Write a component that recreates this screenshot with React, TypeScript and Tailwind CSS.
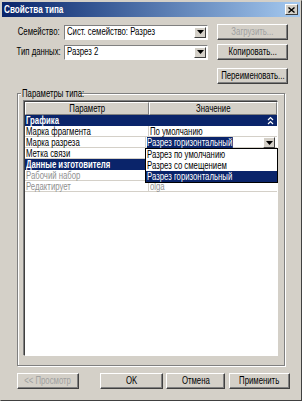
import React from "react";

const font = { fontFamily: '"Liberation Sans", Arial, sans-serif' };

// the screenshot is squeezed horizontally, so text is drawn narrower
function T({ children, o = "left", className = "" }: { children: React.ReactNode; o?: "left" | "right" | "center"; className?: string }) {
  const origin = o === "left" ? "origin-left" : o === "right" ? "origin-right" : "origin-center";
  return <span className={`inline-block whitespace-nowrap scale-x-[0.74] ${origin} ${className}`}>{children}</span>;
}

function Btn({ children, disabled, className = "" }: { children: React.ReactNode; disabled?: boolean; className?: string }) {
  return (
    <div
      className={`flex items-center justify-center whitespace-nowrap h-[16px] text-[10.5px] border border-t-white border-l-white border-r-[#404040] border-b-[#404040] shadow-[inset_-1px_-1px_0_#808080] ${
        disabled ? "text-[#a0a0a0]" : "text-black"
      } ${className}`}
    >
      <T o="center">{children}</T>
    </div>
  );
}

function Arrow() {
  return (
    <div className="w-[12px] h-[11px] bg-[#d4d0c8] border border-t-white border-l-white border-r-[#404040] border-b-[#404040] flex items-center justify-center">
      <svg width="7" height="4" viewBox="0 0 7 4">
        <path d="M0 0h7L3.5 4z" fill="#000" />
      </svg>
    </div>
  );
}

function Combo({ value }: { value: string }) {
  return (
    <div className="w-[144px] h-[15px] bg-white border border-t-[#808080] border-l-[#808080] border-r-white border-b-white flex items-center justify-between pl-[2px] pr-[1px] text-[10.5px]">
      <T>{value}</T>
      <Arrow />
    </div>
  );
}

function Row({ name, value, muted, children }: { name: string; value?: string; muted?: boolean; children?: React.ReactNode }) {
  return (
    <div className={`flex h-[11px] text-[10.5px] leading-[11px] border-b border-[#d4d0c8] ${muted ? "text-[#909090]" : "text-black"}`}>
      <div className="w-[124px] pl-[1px] border-r border-[#d4d0c8]">
        <T>{name}</T>
      </div>
      <div className="flex-1 pl-[1px] relative">{children ?? <T>{value}</T>}</div>
    </div>
  );
}

function Section({ name, chevron }: { name: string; chevron?: boolean }) {
  return (
    <div className="flex h-[11px] bg-[#0a246a] text-white font-bold text-[10.5px] leading-[11px] pl-[1px] pr-[3px] justify-between">
      <T>{name}</T>
      {chevron && (
        <svg width="7" height="9" viewBox="0 0 7 9" className="mt-[1px]">
          <path d="M1 4l2.5-2.5L6 4M1 8l2.5-2.5L6 8" stroke="#fff" strokeWidth="1.2" fill="none" />
        </svg>
      )}
    </div>
  );
}

export default function App() {
  return (
    <div
      style={font}
      className="w-[302px] h-[401px] bg-[#d4d0c8] border border-t-[#d4d0c8] border-l-[#d4d0c8] border-r-[#404040] border-b-[#404040] flex flex-col"
    >
      <div className="h-[15px] mx-[1px] mt-[1px] bg-gradient-to-r from-[#0a246a] to-[#a6caf0] flex items-center justify-between pl-[2px] pr-[2px]">
        <T className="text-white font-bold text-[11px]">Свойства типа</T>
        <div className="w-[13px] h-[11px] bg-[#d4d0c8] border border-t-white border-l-white border-r-[#404040] border-b-[#404040] flex items-center justify-center">
          <svg width="7" height="6" viewBox="0 0 7 6">
            <path d="M0.5 0.5l6 5M6.5 0.5l-6 5" stroke="#000" strokeWidth="1.4" />
          </svg>
        </div>
      </div>

      <div className="flex flex-col pt-[7px]">
        <div className="flex items-center h-[16px]">
          <div className="w-[61px] text-right text-[10.5px] pr-[2px]">
            <T o="right">Семейство:</T>
          </div>
          <div className="ml-[2px]">
            <Combo value="Сист. семейство: Разрез" />
          </div>
          <Btn disabled className="ml-[9px] w-[71px]">Загрузить...</Btn>
        </div>
        <div className="flex items-center h-[16px] mt-[4px]">
          <div className="w-[61px] text-right text-[10.5px] pr-[2px]">
            <T o="right">Тип данных:</T>
          </div>
          <div className="ml-[2px]">
            <Combo value="Разрез 2" />
          </div>
          <Btn className="ml-[9px] w-[71px]">Копировать...</Btn>
        </div>
        <div className="flex justify-end mt-[8px] pr-[13px]">
          <Btn className="w-[71px]">Переименовать...</Btn>
        </div>
      </div>

      <div className="relative mx-[16px] mt-[9px] h-[273px] border border-[#808080] shadow-[1px_1px_0_#fff,inset_1px_1px_0_#fff] px-[6px] pt-[7px] pb-[9px] flex flex-col">
        <span className="absolute -top-[7px] left-[3px] px-[1px] bg-[#d4d0c8] text-[10.5px] leading-[12px] w-[58px]">
          <T>Параметры типа:</T>
        </span>
        <div className="flex-1 bg-white border border-t-[#404040] border-l-[#404040] border-r-white border-b-white shadow-[-1px_-1px_0_#808080] flex flex-col">
          <div className="flex h-[13px] text-[10.5px] leading-[11px] bg-[#d4d0c8]">
            <div className="w-[124px] text-center border border-t-white border-l-white border-r-[#808080] border-b-[#808080]">
              <T o="center">Параметр</T>
            </div>
            <div className="flex-1 text-center border border-t-white border-l-white border-r-[#808080] border-b-[#808080]">
              <T o="center">Значение</T>
            </div>
          </div>
          <Section name="Графика" chevron />
          <Row name="Марка фрагмента" value="По умолчанию" />
          <Row name="Марка разреза">
            <div className="flex justify-between items-center h-[11px] pr-[2px]">
              <T className="bg-[#0a246a] text-white pr-[1px]">Разрез горизонтальный</T>
              <Arrow />
            </div>
            <div className="absolute top-[11px] -left-[1px] w-[133px] bg-white border border-black z-10 text-[10.5px] leading-[11px]">
              <div className="pl-[1px] h-[11px]">
                <T>Разрез по умолчанию</T>
              </div>
              <div className="pl-[1px] h-[11px]">
                <T>Разрез со смещением</T>
              </div>
              <div className="pl-[1px] h-[11px] bg-[#0a246a] text-white">
                <T>Разрез горизонтальный</T>
              </div>
            </div>
          </Row>
          <Row name="Метка связи" value="" />
          <Section name="Данные изготовителя" />
          <Row name="Рабочий набор" value="" muted />
          <Row name="Редактирует" value="olga" muted />
        </div>
      </div>

      <div className="flex items-center mt-[7px] ml-[16px]">
        <Btn disabled className="w-[62px]">&lt;&lt; Просмотр</Btn>
        <Btn className="w-[63px] ml-[21px]">OK</Btn>
        <Btn className="w-[59px] ml-[3px]">Отмена</Btn>
        <Btn className="w-[61px] ml-[4px]">Применить</Btn>
      </div>
    </div>
  );
}
